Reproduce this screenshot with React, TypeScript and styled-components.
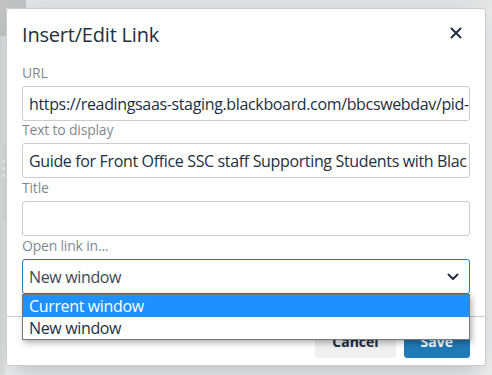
import styled, { createGlobalStyle } from "styled-components";

const GlobalStyle = createGlobalStyle`
  html, body {
    margin: 0;
    padding: 0;
    background: #eeeeee;
  }
  body {
    font-family: "Open Sans", "Noto Sans", sans-serif;
    color: #222f3e;
  }
`;

const Page = styled.div`
  position: relative;
  width: 492px;
  height: 375px;
  overflow: hidden;
  background: #efefef;
  display: grid;
  grid-template-rows: 8px 1fr;
  grid-template-columns: 6px 1fr;
`;

const TopBar = styled.div`
  grid-column: 1 / 3;
  display: flex;
  background: #ebebeb;
`;

const TopBlock = styled.div`
  width: 26px;
  background: #c7c7c7;
`;

const LeftRail = styled.div`
  display: flex;
  flex-direction: column;
  background: linear-gradient(to right, #d9d9d9, #e6e6e6);
`;

const RailTop = styled.div`
  height: 28px;
  background: #c7c7c7;
`;

const RailHandle = styled.div`
  margin-top: 108px;
  height: 76px;
  background: #dcdcdc;
  display: flex;
  flex-direction: column;
  align-items: center;
  padding-top: 16px;
  gap: 4px;
  box-sizing: border-box;
`;

const Dot = styled.span`
  width: 3px;
  height: 3px;
  border-radius: 50%;
  background: #f4f4f4;
`;

const Dialog = styled.div`
  position: absolute;
  left: 6px;
  top: 8px;
  width: 480px;
  height: 358px;
  box-sizing: border-box;
  background: #fff;
  border: 1px solid #cccccc;
  border-radius: 3px;
  box-shadow: 0 16px 16px -10px rgba(34, 47, 62, 0.15),
    0 0 40px 1px rgba(34, 47, 62, 0.15);
  display: flex;
  flex-direction: column;
`;

const Header = styled.div`
  display: flex;
  align-items: flex-start;
  justify-content: space-between;
  height: 55px;
  padding: 0 15px;
  box-sizing: border-box;
`;

const Title = styled.h1`
  margin: 12px 0 0;
  font-size: 20px;
  line-height: 27px;
  font-weight: 400;
  color: #222f3e;
  letter-spacing: -0.2px;
`;

const CloseButton = styled.button`
  border: none;
  background: transparent;
  width: 24px;
  height: 24px;
  padding: 0;
  display: flex;
  align-items: center;
  justify-content: center;
  margin: 12px 2px 0 0;
`;

const Body = styled.div`
  position: relative;
  flex: 1;
  padding: 0 15px;
  display: flex;
  flex-direction: column;
`;

const Field = styled.div<{ $offset?: number }>`
  display: flex;
  flex-direction: column;
  margin-top: ${(p) => p.$offset ?? 0}px;
`;

const Label = styled.label`
  font-size: 14px;
  line-height: 18px;
  padding-bottom: 4px;
  color: rgba(34, 47, 62, 0.6);
  letter-spacing: -0.2px;
`;

const TextInput = styled.div<{ $focused?: boolean }>`
  height: 35px;
  box-sizing: border-box;
  border: 1px solid ${(p) => (p.$focused ? "#207ab7" : "#cccccc")};
  border-radius: 3px;
  padding: 0 6px;
  font-size: 16px;
  letter-spacing: -0.35px;
  color: #222f3e;
  display: flex;
  align-items: center;
  white-space: nowrap;
  overflow: hidden;
  background: #fff;
`;

const SelectBox = styled(TextInput)`
  justify-content: space-between;
  padding-right: 10px;
  color: #3e4752;
`;

const OptionList = styled.div`
  position: absolute;
  left: 15px;
  top: 230px;
  width: 448px;
  box-sizing: border-box;
  border: 1px solid #767676;
  background: #fff;
  box-shadow: 2px 3px 6px rgba(0, 0, 0, 0.3);
  z-index: 2;
`;

const Option = styled.div<{ $active?: boolean }>`
  height: 22px;
  line-height: 22px;
  padding: 0 6px;
  font-size: 16px;
  letter-spacing: -0.35px;
  background: ${(p) => (p.$active ? "#1e90ff" : "#fff")};
  color: ${(p) => (p.$active ? "#fff" : "#222f3e")};
`;

const Footer = styled.div`
  border-top: 1px solid #cccccc;
  padding: 7px 15px 7px;
  display: flex;
  justify-content: flex-end;
  gap: 8px;
`;

const Button = styled.button<{ $primary?: boolean }>`
  height: 34px;
  box-sizing: border-box;
  border-radius: 3px;
  border: 1px solid ${(p) => (p.$primary ? "#207ab7" : "#f0f0f0")};
  background: ${(p) => (p.$primary ? "#207ab7" : "#f0f0f0")};
  color: ${(p) => (p.$primary ? "#fff" : "#222f3e")};
  font-family: inherit;
  font-size: 14px;
  font-weight: 700;
  padding: 0 16px;
  min-width: 64px;
`;

const fields = [
  { label: "URL", value: "https://readingsaas-staging.blackboard.com/bbcswebdav/pid-", offset: 0 },
  { label: "Text to display", value: "Guide for Front Office SSC staff Supporting Students with Blac", offset: 0 },
  { label: "Title", value: "", offset: 1 },
];

export default function App() {
  return (
    <>
      <GlobalStyle />
      <Page>
        <TopBar>
          <TopBlock />
        </TopBar>
        <LeftRail>
          <RailTop />
          <RailHandle>
            <Dot />
            <Dot />
            <Dot />
          </RailHandle>
        </LeftRail>
        <Dialog>
          <Header>
            <Title>Insert/Edit Link</Title>
            <CloseButton aria-label="Close">
              <svg width="12" height="12" viewBox="0 0 12 12">
                <path d="M1.5 1.5 L10.5 10.5 M10.5 1.5 L1.5 10.5" stroke="#222f3e" strokeWidth="2" strokeLinecap="round" />
              </svg>
            </CloseButton>
          </Header>
          <Body>
            {fields.map((f) => (
              <Field key={f.label} $offset={f.offset}>
                <Label>{f.label}</Label>
                <TextInput>{f.value}</TextInput>
              </Field>
            ))}
            <Field $offset={1}>
              <Label>Open link in...</Label>
              <SelectBox $focused>
                <span>New window</span>
                <svg width="12" height="8" viewBox="0 0 12 8">
                  <path d="M1.5 1.5 L6 6 L10.5 1.5" fill="none" stroke="#222f3e" strokeWidth="2" strokeLinecap="round" strokeLinejoin="round" />
                </svg>
              </SelectBox>
            </Field>
            <OptionList>
              <Option $active>Current window</Option>
              <Option>New window</Option>
            </OptionList>
          </Body>
          <Footer>
            <Button>Cancel</Button>
            <Button $primary>Save</Button>
          </Footer>
        </Dialog>
      </Page>
    </>
  );
}
